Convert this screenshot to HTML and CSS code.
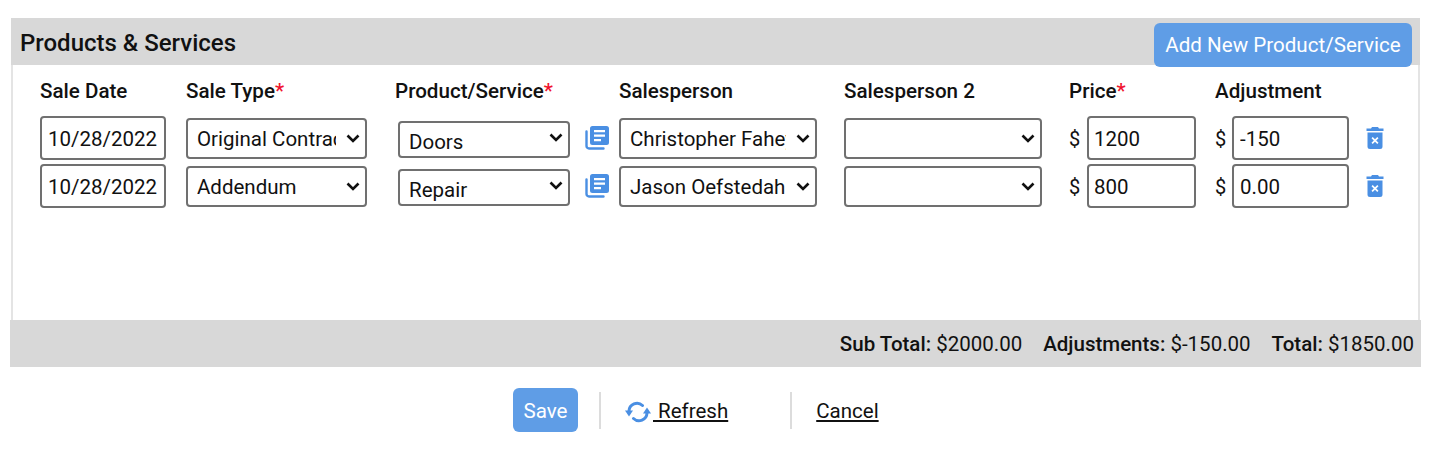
FILE: index.html
```html
<!DOCTYPE html>
<html lang="en">
<head>
<meta charset="utf-8">
<title>Products &amp; Services</title>
<link rel="stylesheet" href="styles.css">
</head>
<body>
<section class="panel">
  <header class="panel-head">
    <h2 class="panel-title">Products &amp; Services</h2>
    <button class="btn btn-add" type="button">Add New Product/Service</button>
  </header>
  <div class="panel-body">
    <div class="grid grid-head">
      <div class="col-label">Sale Date</div>
      <div class="col-label">Sale Type<span class="req">*</span></div>
      <div class="col-label">Product/Service<span class="req">*</span></div>
      <div class="col-label">Salesperson</div>
      <div class="col-label">Salesperson 2</div>
      <div class="col-label">Price<span class="req">*</span></div>
      <div class="col-label">Adjustment</div>
    </div>
    <div class="grid row row-first">
      <input class="field date" type="text" value="10/28/2022">
      <select class="field sel type"><option>Original Contract</option></select>
      <div class="product-cell">
        <select class="field sel product"><option>Doors</option></select>
        <svg class="ico-copy" viewBox="0 0 26 26"><path d="M2.500 6.500V21a2.500 2.500 0 0 0 2.500 2.500h14.500" fill="none" stroke="currentColor" stroke-width="2.400" stroke-linecap="round"/><path fill-rule="evenodd" d="M8.500 1h14A2.500 2.500 0 0 1 25 3.500v14a2.500 2.500 0 0 1-2.500 2.500h-14A2.500 2.500 0 0 1 6 17.500v-14A2.500 2.500 0 0 1 8.500 1zM10 5v2.200h11V5zm0 4.500v2.200h11V9.500zm0 4.500v2.200h7V14z" fill="currentColor"/></svg>
      </div>
      <select class="field sel person"><option>Christopher Fahey</option></select>
      <select class="field sel person"><option></option></select>
      <div class="money"><span class="cur">$</span><input class="field price" type="text" value="1200"></div>
      <div class="money adj-cell">
        <span class="cur cur-adj">$</span><input class="field adj" type="text" value="-150">
        <svg class="ico-trash" viewBox="0 0 18 22"><path fill-rule="evenodd" d="M6 0h6l1 1.500h4.500V4H.5V1.500H5zM1.500 5.500h15V19.500a2.500 2.500 0 0 1-2.500 2.500H4a2.500 2.500 0 0 1-2.500-2.500zM6.700 10l-1.200 1.200L7.800 13.500l-2.300 2.300 1.200 1.200L9 14.700l2.300 2.300 1.200-1.200-2.300-2.300 2.300-2.300L11.300 10 9 12.300z" fill="currentColor"/></svg>
      </div>
    </div>
    <div class="grid row">
      <input class="field date" type="text" value="10/28/2022">
      <select class="field sel type"><option>Addendum</option></select>
      <div class="product-cell">
        <select class="field sel product"><option>Repair</option></select>
        <svg class="ico-copy" viewBox="0 0 26 26"><path d="M2.500 6.500V21a2.500 2.500 0 0 0 2.500 2.500h14.500" fill="none" stroke="currentColor" stroke-width="2.400" stroke-linecap="round"/><path fill-rule="evenodd" d="M8.500 1h14A2.500 2.500 0 0 1 25 3.500v14a2.500 2.500 0 0 1-2.500 2.500h-14A2.500 2.500 0 0 1 6 17.500v-14A2.500 2.500 0 0 1 8.500 1zM10 5v2.200h11V5zm0 4.500v2.200h11V9.500zm0 4.500v2.200h7V14z" fill="currentColor"/></svg>
      </div>
      <select class="field sel person"><option>Jason Oefstedahl</option></select>
      <select class="field sel person"><option></option></select>
      <div class="money"><span class="cur">$</span><input class="field price" type="text" value="800"></div>
      <div class="money adj-cell">
        <span class="cur cur-adj">$</span><input class="field adj" type="text" value="0.00">
        <svg class="ico-trash" viewBox="0 0 18 22"><path fill-rule="evenodd" d="M6 0h6l1 1.500h4.500V4H.5V1.500H5zM1.500 5.500h15V19.500a2.500 2.500 0 0 1-2.500 2.500H4a2.500 2.500 0 0 1-2.500-2.500zM6.700 10l-1.200 1.200L7.800 13.500l-2.300 2.300 1.200 1.200L9 14.700l2.300 2.300 1.200-1.200-2.300-2.300 2.300-2.300L11.300 10 9 12.300z" fill="currentColor"/></svg>
      </div>
    </div>
  </div>
  <footer class="panel-foot">
    <span class="sum"><b>Sub Total:</b> $2000.00</span>
    <span class="sum"><b>Adjustments:</b> $-150.00</span>
    <span class="sum"><b>Total:</b> $1850.00</span>
  </footer>
</section>
<nav class="actions">
  <button class="btn btn-save" type="button">Save</button>
  <span class="sep"></span>
  <a class="link link-refresh" href="#"><svg class="ico-refresh" viewBox="0 0 26 22"><path d="M4 10A8 8 0 0 1 17.500 4.500" fill="none" stroke="currentColor" stroke-width="3" stroke-linecap="round"/><path d="M0 9.500h8l-4 6z" fill="currentColor"/><path d="M22 12A8 8 0 0 1 8.500 17.500" fill="none" stroke="currentColor" stroke-width="3" stroke-linecap="round"/><path d="M26 12.500h-8l4-6z" fill="currentColor"/></svg> Refresh</a>
  <span class="sep sep-2"></span>
  <a class="link" href="#">Cancel</a>
</nav>
</body>
</html>
```
FILE: styles.css
```css
* { box-sizing: border-box; }
html, body { margin: 0; padding: 0; background: #fff; }
body {
  width: 1440px;
  height: 458px;
  overflow: hidden;
  padding-top: 18px;
  font-family: Roboto, "Liberation Sans", sans-serif;
  color: #111;
  font-size: 20px;
}
.panel { margin: 0 19px 0 10px; width: 1411px; }
.panel-head {
  height: 47px;
  margin: 0 1px;
  background: #d8d8d8;
  display: flex;
  justify-content: space-between;
  align-items: flex-start;
  padding: 0 8px 0 9px;
  position: relative;
  z-index: 1;
}
.panel-title {
  margin: 10px 0 0;
  font-size: 24px;
  line-height: 30px;
  font-weight: 500;
}
.btn {
  border: 0;
  border-radius: 6px;
  background: #5f9de6;
  color: #fff;
  font-family: inherit;
  font-size: 20.600px;
  padding: 0;
}
.btn-add { width: 258px; height: 44px; margin-top: 5px; }
.panel-body {
  height: 255px;
  margin: 0 1px;
  border-left: 2px solid #e4e4e4;
  border-right: 2px solid #e4e4e4;
  padding: 13px 0 0 27px;
  background: #fff;
}
.grid {
  display: grid;
  grid-template-columns: 146px 209px 224px 225px 225px 146px 190px;
}
.grid-head { height: 27px; }
.col-label { font-weight: 500; font-size: 20.600px; line-height: 27px; white-space: nowrap; }
.req { color: #f0142f; }
.row { height: 48px; align-items: center; }
.row-first { margin-top: 9px; }
.field {
  font-family: inherit;
  font-size: 20.500px;
  color: #111;
  background-color: #fff;
  border: 2px solid #707070;
  border-radius: 4px;
  margin: 0;
  outline: none;
}
input.field { height: 44px; padding: 2px 0 0 6px; }
.date { width: 126px; }
.sel {
  height: 41px;
  padding: 2px 29px 0 9px;
  appearance: none;
  -webkit-appearance: none;
  background-image: url("data:image/svg+xml,%3Csvg xmlns='http://www.w3.org/2000/svg' viewBox='0 0 14 9'%3E%3Cpath d='M1.500 1.500L7 7l5.500-5.500' fill='none' stroke='%23111' stroke-width='2.600'/%3E%3C/svg%3E");
  background-repeat: no-repeat;
  background-size: 14px 9px;
  background-position: right 5px center;
}
.type { width: 181px; }
.person { width: 198px; }
.product-cell { display: flex; align-items: center; padding-left: 3px; }
.product { width: 172px; height: 37px; padding-top: 5px; margin-top: 2px; background-position: right 5px top 10px; }
.ico-copy { width: 26px; height: 26px; margin-left: 14px; color: #4a8fe3; flex: none; }
.money { display: flex; align-items: center; }
.cur { width: 18px; flex: none; padding-top: 2px; }
.cur-adj { width: 17px; }
input.price { width: 109px; padding-left: 5px; }
.adj { width: 117px; }
.ico-trash { width: 18px; height: 22px; margin-left: 17px; color: #4a8fe3; flex: none; }
.panel-foot {
  height: 47px;
  background: #d8d8d8;
  display: flex;
  justify-content: flex-end;
  align-items: center;
  gap: 21px;
  padding-right: 7px;
  font-size: 20.500px;
}
.sum b { font-weight: 500; }
.actions {
  display: flex;
  align-items: center;
  height: 44px;
  margin-top: 21px;
  padding-left: 513px;
}
.btn-save { width: 65px; height: 44px; padding-top: 2px; }
.sep { width: 2px; height: 37px; background: #dcdcdc; margin: 0 24px 0 21px; flex: none; }
.sep-2 { margin: 0 24px 0 62px; }
.link { color: #111; font-size: 20.500px; text-decoration: underline; white-space: nowrap; padding-top: 2px; }
.ico-refresh { width: 26px; height: 22px; vertical-align: -5px; color: #4a8fe3; margin-right: 2px; }
```
